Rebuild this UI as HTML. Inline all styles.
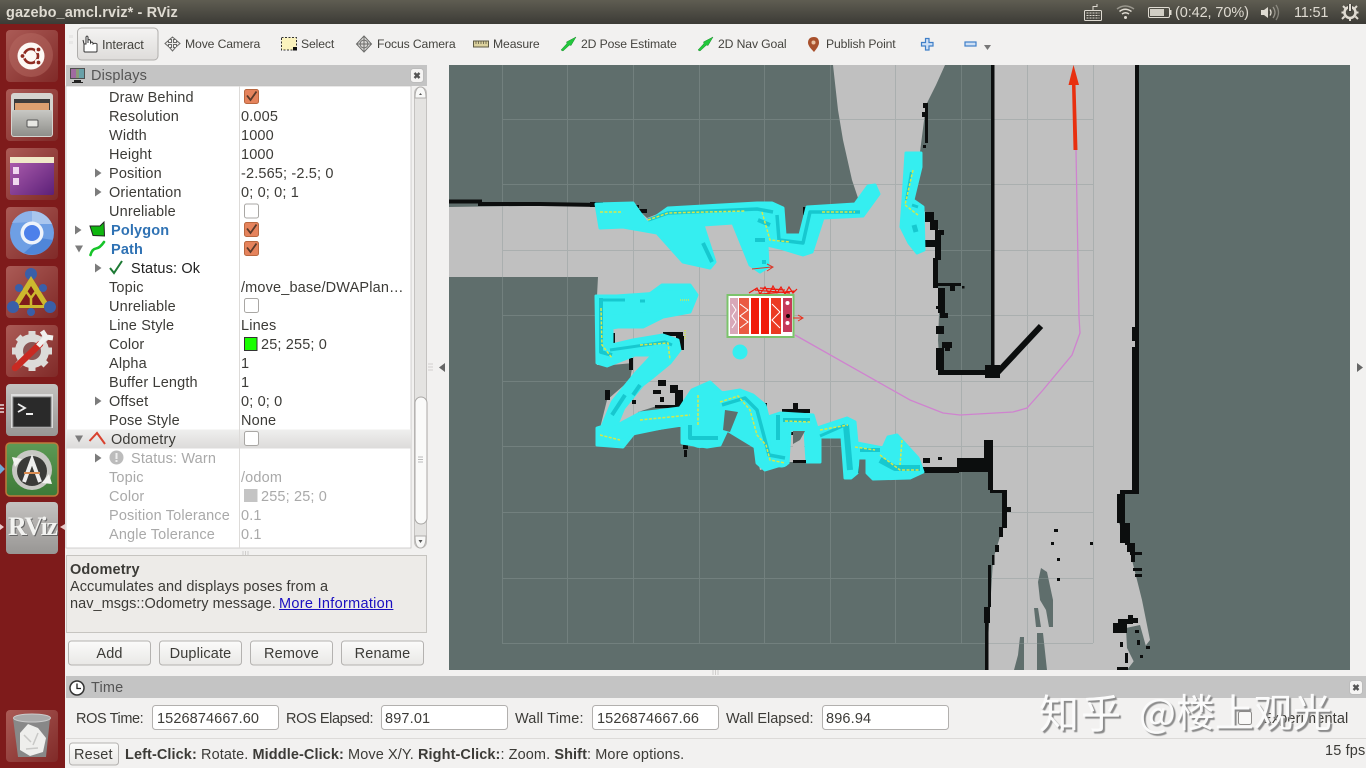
<!DOCTYPE html>
<html><head><meta charset="utf-8"><title>RViz</title>
<style>
html,body{margin:0;padding:0;width:1366px;height:768px;overflow:hidden;background:#f2f1f0}
body{position:relative;font-family:"Liberation Sans","Noto Sans CJK SC",sans-serif;font-size:14.5px;color:#3c3b37}
svg.g{position:absolute;left:0;top:0}
.t{position:absolute;white-space:nowrap;line-height:18px;height:18px;letter-spacing:.15px;margin-top:2px}
.d{color:#a9a9a9}
.b{font-weight:bold;color:#2f72b4}
.s{font-size:12.2px;letter-spacing:-.12px;color:#45443f}
.p{color:#dfdbd2}
.c{text-align:center}
</style></head><body>
<svg class="g" width="1366" height="768" viewBox="0 0 1366 768">
<defs>
<linearGradient id="tb" x1="0" y1="0" x2="0" y2="1"><stop offset="0" stop-color="#5f5d52"/><stop offset="1" stop-color="#3c3b36"/></linearGradient>
<linearGradient id="btn" x1="0" y1="0" x2="0" y2="1"><stop offset="0" stop-color="#fbfbfa"/><stop offset="1" stop-color="#e9e8e6"/></linearGradient>
<linearGradient id="ib" x1="0" y1="0" x2="0" y2="1"><stop offset="0" stop-color="#f4f3f2"/><stop offset="1" stop-color="#dedcda"/></linearGradient>
<linearGradient id="rt" x1="0" y1="0" x2="1" y2="1"><stop offset="0" stop-color="#ab5b56"/><stop offset="1" stop-color="#802a28"/></linearGradient>
<linearGradient id="gt" x1="0" y1="0" x2="0" y2="1"><stop offset="0" stop-color="#c4c2c0"/><stop offset="1" stop-color="#989694"/></linearGradient>
<linearGradient id="grn" x1="0" y1="0" x2="0" y2="1"><stop offset="0" stop-color="#5d9a55"/><stop offset="1" stop-color="#3d7a38"/></linearGradient>
<linearGradient id="pur" x1="0" y1="0" x2="1" y2="1"><stop offset="0" stop-color="#b060b0"/><stop offset="1" stop-color="#5c2078"/></linearGradient>
<linearGradient id="od" x1="0" y1="0" x2="0" y2="1"><stop offset="0" stop-color="#efefee"/><stop offset="1" stop-color="#dcdbda"/></linearGradient>
<linearGradient id="cab" x1="0" y1="0" x2="0" y2="1"><stop offset="0" stop-color="#c8c8c4"/><stop offset="1" stop-color="#8e8e8a"/></linearGradient>
<clipPath id="mapc"><rect x="449" y="65" width="901" height="605"/></clipPath>
<g id="cbon"><rect x=".5" y=".5" width="14" height="14" rx="2" fill="#e5835c" stroke="#b9673f"/><path d="M3 6.5 L6.5 11 L12.5 2.5" fill="none" stroke="#5a3a2a" stroke-width="1.8"/></g>
<g id="cboff"><rect x=".5" y=".5" width="14" height="14" rx="2" fill="#fff" stroke="#a9a7a4"/></g>
<path id="tr" d="M0 0 L6.5 4.5 L0 9 Z" fill="#7c7c7c"/>
<path id="td" d="M0 0 L8 0 L4 7 Z" fill="#7c7c7c"/>
<g id="x"><rect x="0" y="0" width="13" height="14" rx="3" fill="#f5f4f3" stroke="#bcbcbc"/><path d="M4 4.5 L9 9.5 M9 4.5 L4 9.5" stroke="#555" stroke-width="2.4"/></g>
<path id="arrg" d="M0 13 L6 6.5 L5.5 5 L15 0 L10 8.5 L8.5 8 L2 14 Z" fill="#22c83c" stroke="#1a8a2a" stroke-width=".5"/>
</defs>

<!-- top bar -->
<rect x="0" y="0" width="1366" height="24" fill="url(#tb)"/>
<!-- launcher -->
<rect x="0" y="24" width="65" height="744" fill="#7e1b1b"/>
<!-- toolbar -->
<rect x="65" y="24" width="1301" height="41" fill="#f2f1f0"/>
<rect x="77.500" y="28" width="80.500" height="32" rx="4" fill="url(#ib)" stroke="#b0aeac"/>
<path d="M70 35v3M72 35v3M70 41v3M72 41v3" stroke="#ddd" stroke-width="1"/>

<!-- Launcher tiles -->
<rect x="6" y="30" width="52" height="52" rx="4" fill="url(#rt)"/>
<circle cx="31" cy="55" r="22" fill="#b66a62" opacity=".5"/>
<circle cx="31" cy="56" r="13.5" fill="#fdf8f4"/>
<circle cx="31" cy="56" r="7" fill="none" stroke="#8e2a20" stroke-width="2.6"/>
<circle cx="37.500" cy="50.500" r="2.6" fill="#fdf8f4"/><circle cx="37.500" cy="61.500" r="2.6" fill="#fdf8f4"/><circle cx="23.500" cy="56" r="2.6" fill="#fdf8f4"/>
<circle cx="38.500" cy="49.500" r="1.900" fill="#8e2a20"/><circle cx="38.500" cy="62.500" r="1.900" fill="#8e2a20"/><circle cx="22.500" cy="56" r="1.900" fill="#8e2a20"/>

<rect x="6" y="89" width="52" height="52" rx="4" fill="url(#rt)"/>
<rect x="11" y="93" width="42" height="44" rx="3" fill="#d5d4d0"/>
<rect x="14" y="99" width="36" height="12" fill="#3c3c3c"/>
<rect x="15" y="103" width="34" height="8" fill="#dca070"/>
<rect x="12" y="110" width="40" height="26" rx="2" fill="url(#cab)"/>
<rect x="27" y="120" width="11" height="7" rx="1" fill="#e8e8e4" stroke="#555"/>

<rect x="6" y="148" width="52" height="52" rx="4" fill="url(#rt)"/>
<rect x="10" y="157" width="44" height="38" rx="2" fill="url(#pur)"/>
<rect x="10" y="157" width="44" height="6" fill="#f0e8c8"/>
<rect x="13" y="167" width="6" height="7" fill="#f0d8f0"/><rect x="13" y="178" width="6" height="7" fill="#f0d8f0"/>

<rect x="6" y="207" width="52" height="52" rx="4" fill="url(#rt)"/>
<circle cx="32" cy="233" r="22" fill="#6e9fe4"/>
<path d="M32 211 A22 22 0 0 1 52 224 L32 224 Z" fill="#a9c6ee"/>
<path d="M12 223 A22 22 0 0 1 32 211 L32 222 Z" fill="#8db2e9"/>
<path d="M24 253 A22 22 0 0 0 53 240 L40 238 Z" fill="#4f86d8"/>
<circle cx="32" cy="233" r="11.5" fill="#eef3fb"/>
<circle cx="32" cy="233" r="8" fill="#4d80ea"/>

<rect x="6" y="266" width="52" height="52" rx="4" fill="url(#rt)"/>
<circle cx="31" cy="274" r="6" fill="#3a5fa8"/>
<path d="M31 276 L51 308 L11 308 Z" fill="#cdb92e"/>
<path d="M31 286 L43 305 L19 305 Z" fill="#7e1b1b"/>
<path d="M31 298 L31 306 M25 290 L31 298 L37 290" stroke="#cdb92e" stroke-width="2.5" fill="none"/>
<circle cx="13" cy="307" r="6" fill="#3a5fa8"/><circle cx="50" cy="307" r="6" fill="#3a5fa8"/><circle cx="19" cy="288" r="4" fill="#3a5fa8"/><circle cx="43" cy="288" r="4" fill="#3a5fa8"/><circle cx="31" cy="312" r="4" fill="#3a5fa8"/>

<rect x="6" y="325" width="52" height="52" rx="4" fill="url(#rt)"/>
<circle cx="32" cy="351" r="17" fill="#dcdbd8"/>
<path d="M32 331v40M12 351h40M18 337l28 28M46 337l-28 28" stroke="#dcdbd8" stroke-width="7"/>
<circle cx="32" cy="351" r="9" fill="#8a5553"/>
<path d="M15 368 L40 344" stroke="#c92a22" stroke-width="6.5" stroke-linecap="round"/>
<path d="M38 346 L46 337 L42 331 M46 337 L53 338" stroke="#f0f0ee" stroke-width="5" fill="none"/>

<rect x="6" y="384" width="52" height="52" rx="4" fill="url(#gt)"/>
<rect x="11" y="394" width="42" height="34" fill="#ddd"/>
<rect x="13" y="397" width="38" height="30" fill="#2a2a2a" stroke="#777"/>
<path d="M18 404 L25 408 L18 412" fill="none" stroke="#eee" stroke-width="1.8"/><path d="M26 414h7" stroke="#eee" stroke-width="2"/>
<path d="M0 405h4M0 408.500h4M0 412h4" stroke="#e8dcdc" stroke-width="1.5"/>

<rect x="6" y="443" width="52" height="53" rx="4" fill="url(#grn)" stroke="#c07a3c" stroke-width="1.5"/>
<circle cx="32" cy="470" r="20" fill="#c8c8c4"/>
<circle cx="32" cy="471" r="15" fill="#3a3a38"/>
<path d="M22 459 L12 457 L15 467 Z M42 483 L52 484 L49 474 Z" fill="#f2f2f0"/>
<path d="M24 482 L32 460 L40 482" fill="none" stroke="#eee" stroke-width="4"/>
<path d="M24 473h16" stroke="#d88a50" stroke-width="2"/>
<path d="M0 464 L5 469 L0 474 Z" fill="#6fa8d8"/>

<rect x="6" y="502" width="52" height="52" rx="4" fill="url(#gt)"/>
<path d="M0 524 L4 527 L0 530 Z M65 524 L60 527 L65 530 Z" fill="#e8c8c8"/>

<rect x="6" y="710" width="52" height="52" rx="4" fill="url(#rt)"/>
<path d="M13 718 L50 718 L46 757 L18 757 Z" fill="#888"/>
<ellipse cx="32" cy="718" rx="18.500" ry="4" fill="#aaa" stroke="#ccc"/>
<path d="M20 733 L28 724 L38 728 L46 738 L43 752 L30 756 L20 750 Z" fill="#eeeeec"/>
<path d="M24 735 L31 742 M38 733 L33 745 M26 749 L38 748" stroke="#c8c8c6" stroke-width="1.500"/>

<!-- toolbar icons -->
<path d="M84 51 L84 44 L83 40 M84 44 L86 44 L86 37 Q87 35 88 37 L88 43 L88 40 Q90 39 90.500 41 L90.500 43 Q92 41 93 43 L93 44 Q95 42.500 97 44 L97 51 Q97 52 96 52 L85 52 Q84 52 84 51 Z" fill="#fff" stroke="#333" stroke-width="1"/>
<g fill="none" stroke="#6a6a68" stroke-width="1"><path d="M172.500 37 L169.500 39.500 L171.500 39.500 L171.500 42.500 L168.500 42.500 L168.500 40.500 L165 43.500 L168.500 46.500 L168.500 44.500 L171.500 44.500 L171.500 47.500 L169.500 47.500 L172.500 51 L175.500 47.500 L173.500 47.500 L173.500 44.500 L176.500 44.500 L176.500 46.500 L180 43.500 L176.500 40.500 L176.500 42.500 L173.500 42.500 L173.500 39.500 L175.500 39.500 Z" fill="#ecebea"/></g>
<rect x="281.500" y="37.500" width="15" height="12.500" fill="#fbf3bd" stroke="#333" stroke-dasharray="2 1.500"/><rect x="293" y="47" width="4" height="3.500" fill="#111"/>
<g fill="none" stroke="#6a6a68"><path d="M364 36 L371.500 44 L364 52 L356.500 44 Z" fill="#e9e8e6"/><circle cx="364" cy="44" r="4" fill="#d8d6d4"/><path d="M364 37v14M357 44h14"/></g>
<rect x="473.500" y="41" width="15" height="6" fill="#dcd29e" stroke="#5e5a44"/><path d="M476 41v3M478.500 41v3M481 41v3M483.500 41v3M486 41v3" stroke="#5e5a44" stroke-width=".8"/>
<use href="#arrg" x="561" y="37"/><use href="#arrg" x="698" y="37"/>
<path d="M814 37 Q808 37 808 43 Q808 46 814 52 Q819 46 819 43 Q819 37 814 37 Z" fill="#a8502c"/><circle cx="813.500" cy="42.500" r="2" fill="#e8c0a0"/>
<path d="M925.500 38.500h3.500v4h4v3.500h-4v4h-3.500v-4h-4v-3.500h4z" fill="#cfe0f5" stroke="#3f7fc8" stroke-width="1.200"/>
<rect x="965" y="42" width="11" height="4" fill="#cfe0f5" stroke="#3f7fc8" stroke-width="1.200"/>
<path d="M984 45 L991 45 L987.500 50 Z" fill="#777"/>

<!-- top right indicators -->
<g fill="none" stroke="#dfdbd2">
<rect x="1084.500" y="10.500" width="17" height="10" rx="1"/><path d="M1086.500 13h13M1086.500 15.500h13M1086.500 18h13" stroke-dasharray="2 1"/><path d="M1093 10V6.500h4V4"/>
<path d="M1117 9 Q1125 3 1134 9" opacity=".5" stroke-width="1.500"/><path d="M1119.500 11.500 Q1125 7 1131.500 11.500" stroke-width="1.500"/><path d="M1122 14 Q1125.500 11.500 1129 14" stroke-width="1.500"/>
<rect x="1148.500" y="7.500" width="21" height="10" rx="1.500"/>
</g>
<rect x="1150" y="9" width="14" height="7" fill="#dfdbd2" opacity=".9"/><rect x="1170" y="10" width="1.500" height="5" fill="#dfdbd2"/>
<circle cx="1125.500" cy="17.500" r="1.500" fill="#dfdbd2"/>
<path d="M1261 10h3l4-3v11l-4-3h-3z" fill="#dfdbd2"/>
<g fill="none" stroke="#dfdbd2" stroke-width="1.300"><path d="M1270 9.500 Q1272 12.500 1270 15.500"/><path d="M1273 7 Q1277 12.500 1273 18" opacity=".5"/><path d="M1276 5 Q1281 12.500 1276 20" opacity=".4"/></g>
<circle cx="1350" cy="12.500" r="5.500" fill="none" stroke="#dfdbd2" stroke-width="2.600"/>
<path d="M1350 4v8" stroke="#3f3e39" stroke-width="4"/><path d="M1350 4v7" stroke="#dfdbd2" stroke-width="2"/>
<path d="M1343 6l2.500 2.500M1357 6l-2.500 2.500M1342 19l2.500-2.500M1358 19l-2.500-2.500M1350 18v3M1341.500 12.500h2M1356.500 12.500h2" stroke="#dfdbd2" stroke-width="2"/>

<!-- Displays -->
<rect x="66" y="65" width="361" height="21" fill="#c4c4c4"/>
<rect x="70" y="68" width="15" height="11" fill="#4e4e4e"/><rect x="71" y="69" width="13" height="9" fill="#8a9a78"/><rect x="71" y="69" width="5" height="9" fill="#a06aa0"/><rect x="79" y="69" width="5" height="9" fill="#68a0a8"/>
<path d="M74 80h7v2h2v1H72v-1h2z" fill="#222"/>
<use href="#x" x="410.500" y="68.500"/>
<rect x="66" y="86" width="345" height="462" fill="#fff" stroke="#c0bebc" stroke-width=".7"/>
<rect x="66" y="429.500" width="345" height="19" fill="url(#od)"/>
<path d="M239.500 86v462" stroke="#dddbd9"/>
<!-- scrollbar -->
<rect x="414.500" y="87" width="12" height="461" rx="6" fill="#e4e3e1" stroke="#c4c2c0"/>
<path d="M415 98 Q415 87 420.500 87 Q426 87 426 98 Z" fill="#f8f8f7" stroke="#b0aeac"/>
<path d="M415 536 Q415 548 420.500 548 Q426 548 426 536 Z" fill="#f8f8f7" stroke="#b0aeac"/>
<path d="M419 95 L422 95 L420.500 93 Z M418.500 540 L422.500 540 L420.500 543 Z" fill="#555"/>
<rect x="415" y="397" width="12" height="127" rx="6" fill="#fafaf9" stroke="#a9a7a5"/>
<path d="M418 457h5M418 459.500h5M418 462h5" stroke="#bbb"/>
<!-- tree arrows -->
<use href="#tr" x="95" y="168.500"/><use href="#tr" x="95" y="187.500"/><use href="#tr" x="75" y="225.500"/><use href="#td" x="75" y="245.500"/><use href="#tr" x="95" y="263.500"/><use href="#tr" x="95" y="396.500"/><use href="#td" x="75" y="435.500"/><use href="#tr" x="95" y="453.500"/>
<!-- checkboxes -->
<use href="#cbon" x="244" y="89"/><use href="#cboff" x="244" y="203.500"/><use href="#cbon" x="244" y="222"/><use href="#cbon" x="244" y="241"/><use href="#cboff" x="244" y="298"/><use href="#cboff" x="244" y="431"/>
<!-- display icons -->
<path d="M90 226 L100 226 L104 222 L104.500 236 L93 235.500 Z" fill="#0fb60f" stroke="#222" stroke-width="1"/>
<path d="M90.500 255 Q92 249 96 248.500 Q100 248 104 242" fill="none" stroke="#17c42a" stroke-width="2.600" stroke-linecap="round"/>
<path d="M110 268 L114 273 L122 261" fill="none" stroke="#1d7a34" stroke-width="2"/>
<path d="M89.500 441 L97 433 L105 444" fill="none" stroke="#d8412e" stroke-width="2"/>
<circle cx="116.500" cy="457.500" r="7" fill="#bcbcbc"/><rect x="115.500" y="453" width="2" height="6" fill="#eee"/><rect x="115.500" y="460" width="2" height="2" fill="#eee"/>
<rect x="244.500" y="337.500" width="12.500" height="13" fill="#19ff00" stroke="#333"/>
<rect x="244" y="489" width="13.500" height="13" fill="#c4c4c4"/>
<!-- splitters -->
<path d="M243 551v5M245.500 551v5M248 551v5" stroke="#cfcdcb"/>
<path d="M428 364h5M428 367h5M428 370h5" stroke="#d2d0ce"/>
<path d="M445 363 L445 372 L439 367.500 Z" fill="#666"/>
<path d="M1357 363 L1357 372 L1363 367.500 Z" fill="#666"/>
<path d="M713 670v5M715.500 670v5M718 670v5" stroke="#cfcdcb"/>
<!-- desc -->
<rect x="66.500" y="555.500" width="360" height="77" fill="#edebe8" stroke="#c6c4c0"/>
<g fill="url(#btn)" stroke="#b4b2b0"><rect x="68.500" y="641" width="82" height="24" rx="3"/><rect x="159.500" y="641" width="82" height="24" rx="3"/><rect x="250.500" y="641" width="82" height="24" rx="3"/><rect x="341.500" y="641" width="82" height="24" rx="3"/></g>

<!-- Time -->
<rect x="66" y="676" width="1300" height="22" fill="#c4c4c4"/>
<circle cx="77" cy="688" r="7" fill="#fff" stroke="#333" stroke-width="1.500"/><path d="M77 683.500v5h4" fill="none" stroke="#222" stroke-width="1.300"/>
<use href="#x" x="1349.500" y="680.500"/>
<g fill="#fff" stroke="#b2b0ae"><rect x="152.500" y="705.500" width="126" height="24" rx="3"/><rect x="381.500" y="705.500" width="126" height="24" rx="3"/><rect x="592.500" y="705.500" width="126" height="24" rx="3"/><rect x="822.500" y="705.500" width="126" height="24" rx="3"/></g>
<path d="M66 738.500h1300" stroke="#dcdad8"/>
<rect x="69.500" y="743" width="49" height="22" rx="3" fill="url(#btn)" stroke="#b4b2b0"/>
<rect x="1238.500" y="711.500" width="13" height="13" rx="2" fill="#f8f8f7" stroke="#8e8c8a"/>

<!-- MAP -->
<g clip-path="url(#mapc)">
<rect x="449" y="65" width="901" height="605" fill="#5f6e6c"/>
<path d="M449 207 L596 205 L633 205 L647 218 L668 210 L757 205 L772 205 L783 210 L785 235 L803 235 L807 207 L857 205 L858 198 L852 180 L843 140 L838 110 L833 65 L1135 65 L1135 490 L1120 492 L1118 520 L1130 552 L1142 600 L1150 640 L1127 670 L986 670 L990 610 L993 560 L1005 520 L1005 492 L990 490 L990 470 L923 472 L873 477 L867 473 L867 458 L858 458 L857 473 L847 477 L842 437 L820 437 L820 462 L807 462 L805 462 L790 462 L788 463 L760 470 L755 447 L727 430 L682 443 L682 425 L635 432 L623 447 L597 445 L600 428 L607 400 L615 393 L630 380 L633 363 L612 365 L597 365 L597 296 L598 277 L449 277 Z" fill="#c0c0c0"/>
<!-- dark room -->
<path d="M945 65 L991 65 L991 372 L940 372 L938 340 L940 290 L935 285 L936 250 L940 232 L930 215 L915 205 L912 185 L920 152 L926 105 L936 85 Z" fill="#5f6e6c"/>
<!-- dark patches -->
<path d="M638 412 L660 405 L680 408 L682 425 L635 432 Z" fill="#5f6e6c"/>
<path d="M1041 568 L1047 572 L1053 600 L1053 627 L1049 627 L1046 610 L1040 600 L1038 582 Z M1034 608 L1038 608 L1041 627 L1036 627 Z M1037 633 L1043 633 L1047 670 L1037 670 Z M1020 637 L1024 637 L1024 670 L1014 670 L1018 655 Z" fill="#5f6e6c"/>
<path d="M1126 628 L1140 625 L1147 650 L1134 662 L1127 648 Z" fill="#5f6e6c"/>
<!-- grid -->
<g stroke="#8d9a98" stroke-width="1" opacity=".42" fill="none">
<path d="M502.500 65V643M567.500 65V643M633.500 65V643M699.500 65V643M764.500 65V643M830.500 65V643M895.500 65V643M961.500 65V643M1027.500 65V643M1093.500 65V643"/>
<path d="M502 119.500H1093M502 184.500H1093M502 250.500H1093M502 315.500H1093M502 381.500H1093M502 446.500H1093M502 512.500H1093M502 578.500H1093M502 643.500H1093"/>
</g>
<!-- black walls -->
<g fill="#0c0e0e">
<rect x="991" y="65" width="3.500" height="310"/>
<rect x="938" y="370" width="62" height="5"/>
<rect x="1135" y="65" width="4" height="300"/>
<rect x="1132" y="327" width="7" height="14"/><rect x="1132" y="347" width="7" height="145"/>
<rect x="1120" y="490" width="19" height="4"/><rect x="1117" y="494" width="8" height="29"/><rect x="1120" y="523" width="10" height="20"/><rect x="1125" y="533" width="5" height="12"/><rect x="1127" y="543" width="8" height="9"/><rect x="1130" y="552" width="12" height="3"/><rect x="1131" y="555" width="4" height="7"/><rect x="1133" y="568" width="9" height="3"/><rect x="1135" y="574" width="7" height="3"/>
<rect x="1113" y="623" width="14" height="10"/><rect x="1118" y="619" width="15" height="5"/><rect x="1128" y="615" width="5" height="4"/><rect x="1133" y="618" width="5" height="5"/><rect x="1135" y="630" width="4" height="3"/><rect x="1146" y="646" width="4" height="3"/><rect x="1125" y="653" width="3" height="10"/><rect x="1117" y="667" width="11" height="3"/><rect x="1120" y="642" width="3" height="5"/><rect x="1140" y="655" width="3" height="3"/><rect x="1137" y="640" width="3" height="5"/>
<rect x="988" y="440" width="5" height="50"/><rect x="990" y="490" width="17" height="3"/><rect x="1002" y="492" width="5" height="36"/><rect x="1002" y="507" width="9" height="5"/><rect x="999" y="527" width="4" height="10"/><rect x="995" y="545" width="4" height="7"/><rect x="992" y="555" width="2.500" height="10"/><rect x="988" y="565" width="3" height="42"/><rect x="984" y="607" width="6" height="16"/><rect x="985" y="623" width="3.500" height="47"/>
<rect x="957" y="458" width="36" height="14"/><rect x="923" y="467" width="36" height="6"/><rect x="923" y="458" width="7" height="5"/><rect x="984" y="440" width="9" height="18"/><rect x="938" y="457" width="4" height="3"/>
<rect x="925" y="103" width="3" height="40"/><rect x="922" y="112" width="4" height="5"/><rect x="923" y="103" width="3" height="5"/><rect x="923" y="145" width="3" height="3"/>
<rect x="925" y="212" width="9" height="10"/><rect x="930" y="220" width="8" height="10"/><rect x="935" y="230" width="9" height="5"/><rect x="925" y="240" width="16" height="7"/><rect x="935" y="235" width="6" height="25"/><rect x="933" y="258" width="5" height="30"/>
<rect x="936" y="283" width="25" height="3"/><rect x="950" y="283" width="5" height="8"/><rect x="938" y="288" width="7" height="25"/><rect x="936" y="306" width="8" height="3"/><rect x="940" y="313" width="8" height="5"/><rect x="936" y="326" width="8" height="8"/><rect x="942" y="342" width="10" height="6"/><rect x="945" y="345" width="5" height="6"/><rect x="936" y="348" width="8" height="22"/><rect x="962" y="286" width="2.500" height="2.500"/>
<rect x="985" y="365" width="15" height="13"/>
</g>
<path d="M998 372 L1041 326" stroke="#0c0e0e" stroke-width="6" fill="none"/>
<path d="M449 201.500 H480 V204 H540 L600 205" stroke="#0c0e0e" stroke-width="4" fill="none"/>
<g fill="#0c0e0e">
<rect x="590" y="202" width="13" height="5"/><rect x="633" y="205" width="6" height="3"/><rect x="638" y="209" width="9" height="4"/><rect x="803" y="207" width="5" height="8"/><rect x="761" y="203" width="6" height="3"/>
<rect x="605" y="330" width="5" height="4"/><rect x="610" y="333" width="5" height="12"/><rect x="663" y="332" width="20" height="4"/><rect x="676" y="336" width="8" height="14"/><rect x="657" y="357" width="8" height="7"/>
<rect x="629" y="358" width="4" height="12"/>
<rect x="658" y="380" width="8" height="6"/><rect x="670" y="385" width="8" height="8"/><rect x="675" y="390" width="8" height="18"/><rect x="653" y="390" width="8" height="4"/><rect x="660" y="397" width="4" height="5"/><rect x="655" y="405" width="20" height="3"/><rect x="605" y="390" width="5" height="10"/><rect x="632" y="400" width="4" height="4"/>
<rect x="683" y="445" width="5" height="4"/><rect x="684" y="450" width="3" height="7"/><rect x="763" y="403" width="4" height="12"/><rect x="743" y="395" width="12" height="3"/><rect x="782" y="409" width="28" height="4"/><rect x="793" y="403" width="5" height="7"/><rect x="793" y="460" width="13" height="3"/><rect x="790" y="432" width="5" height="3"/><rect x="856" y="458" width="3" height="15"/><rect x="723" y="425" width="2" height="8"/>
<rect x="1054" y="529" width="4" height="3"/><rect x="1051" y="542" width="3" height="3"/><rect x="1090" y="542" width="3" height="3"/><rect x="1057" y="558" width="3" height="3"/><rect x="1057" y="578" width="3" height="3"/>
</g>
<!-- cyan -->
<g fill="#35eef0" stroke="#35eef0" stroke-width="3" stroke-linejoin="round">
<path d="M596 204 L633 203 L647 223 L668 208 L757 203 L772 203 L783 208 L785 235 L800 235 L807 207 L855 204 L868 186 L875 185 L879 194 L863 216 L823 218 L812 252 L803 255 L780 248 L767 245 L768 267 L760 272 L750 265 L733 223 L703 225 L715 262 L710 268 L683 262 L657 233 L623 227 L600 228 Z"/>
<path d="M906 153 L921 153 L921 167 L913 200 L923 207 L924 250 L917 253 L909 243 L901 227 L903 200 Z"/>
<path d="M597 428 L607 425 L613 405 L633 382 L662 355 L635 355 L607 366 L597 363 L596 296 L647 296 L662 285 L690 285 L697 295 L690 312 L663 317 L643 327 L618 327 L612 328 L612 345 L633 340 L663 335 L678 340 L680 350 L670 363 L653 377 L640 387 L632 397 L625 405 L612 428 L640 413 L680 408 L692 390 L710 382 L722 393 L740 390 L753 395 L765 405 L768 417 L780 413 L813 415 L817 428 L847 418 L855 422 L857 443 L883 448 L888 437 L897 435 L918 458 L923 472 L910 478 L873 479 L867 473 L867 458 L858 458 L857 473 L851 478 L845 478 L842 437 L820 437 L820 462 L807 462 L805 430 L790 430 L788 463 L765 470 L757 463 L755 447 L727 430 L720 445 L707 447 L682 443 L682 425 L635 432 L623 447 L597 445 Z"/>
<circle cx="740" cy="352" r="6"/>
</g>
<g fill="none" stroke="#35eef0" stroke-linecap="round" stroke-linejoin="round">
<path d="M668 348 L640 378 L618 405 L606 434" stroke-width="16"/>
<path d="M606 436 L632 428 L690 416 L712 398 L745 400 L760 420 L765 458 L782 460" stroke-width="15"/>
<path d="M700 400 L700 435" stroke-width="26"/>
<path d="M610 305 L680 300" stroke-width="20"/>
</g>
<path d="M725 410 L738 412 L730 432 L723 430 Z" fill="#5f6e6c"/>
<path d="M793 432 L804 432 L804 461 L793 461 Z" fill="#c0c0c0"/>
<path d="M793 431 L805 431 L800 440 L793 444 Z" fill="#5f6e6c"/>
<rect x="793" y="460" width="13" height="3" fill="#0c0e0e"/>
<!-- teal -->
<g fill="none" stroke="#14c4cc" stroke-linejoin="round" opacity=".9">
<path d="M648 220 L668 213 L757 209 L773 212 M777 215 L779 240 L803 243 L810 212 L860 212" stroke-width="3.500"/>
<path d="M755 240 L765 240" stroke-width="4"/><path d="M758 220 L770 225" stroke-width="4"/>
<path d="M703 243 L712 262" stroke-width="4"/><path d="M762 262 L766 262" stroke-width="4"/>
<path d="M912 205 L918 207" stroke-width="3"/><path d="M911 172 L906 200" stroke-width="2"/><path d="M914 225 L916 232" stroke-width="5"/>
<path d="M601 298 L601 352 L612 355" stroke-width="4"/><path d="M601 300 L625 300" stroke-width="3"/><path d="M640 301 L645 301" stroke-width="3"/>
<path d="M610 350 L665 342 L672 345" stroke-width="3"/><path d="M640 385 L633 395" stroke-width="4"/><path d="M625 395 L612 415" stroke-width="4"/>
<path d="M690 425 L690 438 L718 438" stroke-width="4"/><path d="M722 405 L745 398 L757 410 L765 440 L769 455 L785 458" stroke-width="3.500"/>
<path d="M778 415 L778 440 M783 420 L810 420" stroke-width="4"/><path d="M846 425 L850 470" stroke-width="6"/><path d="M820 436 L845 425" stroke-width="3"/><path d="M860 450 L880 450" stroke-width="4"/><path d="M880 460 L895 468 L920 468" stroke-width="6"/>
</g>
<!-- yellow -->
<g fill="none" stroke="#d5e84a" stroke-width="1.500" stroke-dasharray="3 1.500">
<path d="M600 212 L622 212"/><path d="M648 220 L668 213 L745 211"/><path d="M762 212 L770 240 L790 242"/><path d="M822 212 L855 212"/>
<path d="M913 170 L905 205 L918 215"/><path d="M601 308 L602 345 L612 358"/><path d="M640 345 L668 343 L670 360"/>
<path d="M600 435 L620 440"/><path d="M640 420 L690 415"/><path d="M698 395 L698 425"/><path d="M720 402 L738 396 L750 410 L757 435 L766 445 L770 460 L785 463"/><path d="M785 421 L810 422"/><path d="M820 430 L848 425"/><path d="M855 447 L875 450"/><path d="M880 455 L900 470 L920 470"/><path d="M902 440 L900 465"/>
<path d="M685 330 L685 340" stroke-dasharray="1 1"/><path d="M680 300 L690 300" stroke-dasharray="1 1"/>
</g>
<!-- pink path -->
<path d="M795 335 L910 400 L943 413 L960 415 L1013 412 L1027 408 L1043 390 L1072 355 L1080 333 L1079 317 L1076 150" fill="none" stroke="#cf83cf" stroke-width="1.300"/>
<!-- red goal arrow -->
<path d="M1073.500 150 L1077.500 150 L1075.500 85 L1079 85 L1073.500 65 L1068.500 85 L1072 85 Z" fill="#e8300f"/>
<!-- robot -->
<path d="M749 293 L757 288 L760 294 L765 287 L769 294 L773 286 L777 293 L781 287 L785 294 L789 287 L793 293 L797 289 M750 295 L795 291 M755 290 L790 293 M760 288 L785 290" fill="none" stroke="#ee1c10" stroke-width="1.200"/>
<rect x="727.500" y="295" width="66" height="42" fill="#fff" stroke="#7cc36c" stroke-width="2"/>
<rect x="730" y="298" width="8" height="36" fill="#d8a8b8"/>
<rect x="739" y="298" width="10" height="36" fill="#ea5a42"/>
<rect x="751" y="298" width="8" height="36" fill="#f01c0a"/>
<rect x="761" y="298" width="8" height="36" fill="#f01c0a"/>
<rect x="771" y="298" width="10" height="36" fill="#ec3a22"/>
<rect x="783" y="298" width="9" height="34" fill="#c63a5a"/>
<circle cx="787.500" cy="303" r="2" fill="#fff"/><circle cx="787.500" cy="323" r="2" fill="#fff"/><circle cx="788" cy="316" r="2" fill="#180808"/>
<path d="M732 304l4 6-4 6 4 6-4 6M740 304l8 6-8 6 8 6-8 6M772 304l8 8-8 8 8 8" fill="none" stroke="#fff" stroke-width="1"/>
<path d="M793 318 L802 318 M798 315 L803 318 L798 321" fill="none" stroke="#e8301c" stroke-width="1"/>
<path d="M752 269 L772 267 M767 264 L773 267 L767 271" fill="none" stroke="#d83a2c" stroke-width="1"/>
</g>
</svg>

<!-- top bar text -->
<div class="t" style="left:6px;top:2px;font-weight:bold;font-size:14.500px;color:#dfdbd2;letter-spacing:.1px">gazebo_amcl.rviz* - RViz</div>
<div class="t p" style="left:1175px;top:2px;font-size:14.500px;letter-spacing:-.1px">(0:42, 70%)</div>
<div class="t p" style="left:1294px;top:2px;font-size:14.500px;letter-spacing:-.2px">11:51</div>

<!-- launcher text -->
<div class="t" style="left:8px;top:512px;font-family:'Liberation Serif',serif;font-weight:bold;font-size:26px;color:#f2f2f0;letter-spacing:-1.500px;line-height:26px;height:26px;text-shadow:1px 1px 0 #666">RViz</div>

<!-- toolbar text -->
<div class="t s" style="left:102px;top:34px;font-size:12.800px">Interact</div>
<div class="t s" style="left:185px;top:33px">Move Camera</div>
<div class="t s" style="left:301px;top:33px">Select</div>
<div class="t s" style="left:377px;top:33px">Focus Camera</div>
<div class="t s" style="left:493px;top:33px">Measure</div>
<div class="t s" style="left:581px;top:33px">2D Pose Estimate</div>
<div class="t s" style="left:718px;top:33px">2D Nav Goal</div>
<div class="t s" style="left:826px;top:33px">Publish Point</div>

<!-- Displays -->
<div class="t" style="left:91px;top:65px;color:#555">Displays</div>

<div class="t" style="left:109px;top:87px">Draw Behind</div>
<div class="t" style="left:109px;top:106px">Resolution</div><div class="t" style="left:241px;top:106px">0.005</div>
<div class="t" style="left:109px;top:125px">Width</div><div class="t" style="left:241px;top:125px">1000</div>
<div class="t" style="left:109px;top:144px">Height</div><div class="t" style="left:241px;top:144px">1000</div>
<div class="t" style="left:109px;top:163px">Position</div><div class="t" style="left:241px;top:163px">-2.565; -2.5; 0</div>
<div class="t" style="left:109px;top:182px">Orientation</div><div class="t" style="left:241px;top:182px">0; 0; 0; 1</div>
<div class="t" style="left:109px;top:201px">Unreliable</div>
<div class="t b" style="left:111px;top:220px">Polygon</div>
<div class="t b" style="left:111px;top:239px">Path</div>
<div class="t" style="left:131px;top:258px;color:#222">Status: Ok</div>
<div class="t" style="left:109px;top:277px">Topic</div><div class="t" style="left:241px;top:277px">/move_base/DWAPlan…</div>
<div class="t" style="left:109px;top:296px">Unreliable</div>
<div class="t" style="left:109px;top:315px">Line Style</div><div class="t" style="left:241px;top:315px">Lines</div>
<div class="t" style="left:109px;top:334px">Color</div><div class="t" style="left:261px;top:334px">25; 255; 0</div>
<div class="t" style="left:109px;top:353px">Alpha</div><div class="t" style="left:241px;top:353px">1</div>
<div class="t" style="left:109px;top:372px">Buffer Length</div><div class="t" style="left:241px;top:372px">1</div>
<div class="t" style="left:109px;top:391px">Offset</div><div class="t" style="left:241px;top:391px">0; 0; 0</div>
<div class="t" style="left:109px;top:410px">Pose Style</div><div class="t" style="left:241px;top:410px">None</div>
<div class="t" style="left:111px;top:429px">Odometry</div>
<div class="t d" style="left:131px;top:448px">Status: Warn</div>
<div class="t d" style="left:109px;top:467px">Topic</div><div class="t d" style="left:241px;top:467px">/odom</div>
<div class="t d" style="left:109px;top:486px">Color</div><div class="t d" style="left:261px;top:486px">255; 25; 0</div>
<div class="t d" style="left:109px;top:505px">Position Tolerance</div><div class="t d" style="left:241px;top:505px">0.1</div>
<div class="t d" style="left:109px;top:524px">Angle Tolerance</div><div class="t d" style="left:241px;top:524px">0.1</div>

<div class="t" style="left:70px;top:559px;font-weight:bold">Odometry</div>
<div class="t" style="left:70px;top:576px;letter-spacing:.07px">Accumulates and displays poses from a</div>
<div class="t" style="left:70px;top:593px;letter-spacing:.04px">nav_msgs::Odometry message.</div>
<div class="t" style="left:279px;top:593px;color:#1a0fc0;text-decoration:underline;letter-spacing:.3px">More Information</div>

<div class="t c" style="left:68px;width:83px;top:643px">Add</div>
<div class="t c" style="left:159px;width:83px;top:643px">Duplicate</div>
<div class="t c" style="left:250px;width:83px;top:643px">Remove</div>
<div class="t c" style="left:341px;width:83px;top:643px">Rename</div>

<!-- Time -->
<div class="t" style="left:91px;top:677px;color:#555">Time</div>
<div class="t" style="left:76px;top:708px;letter-spacing:-.4px">ROS Time:</div><div class="t" style="left:157px;top:708px;letter-spacing:.1px">1526874667.60</div>
<div class="t" style="left:286px;top:708px;letter-spacing:-.4px">ROS Elapsed:</div><div class="t" style="left:385px;top:708px">897.01</div>
<div class="t" style="left:515px;top:708px">Wall Time:</div><div class="t" style="left:597px;top:708px;letter-spacing:.1px">1526874667.66</div>
<div class="t" style="left:726px;top:708px;letter-spacing:-.05px">Wall Elapsed:</div><div class="t" style="left:826px;top:708px">896.94</div>
<div class="t" style="left:1262px;top:708px">Experimental</div>
<div class="t" style="left:74px;top:744px">Reset</div>
<div class="t" style="left:125px;top:744px;letter-spacing:.09px"><b>Left-Click:</b> Rotate. <b>Middle-Click:</b> Move X/Y. <b>Right-Click:</b>: Zoom. <b>Shift</b>: More options.</div>
<div class="t" style="left:1325px;top:740px">15 fps</div>

<!-- watermark -->
<div class="t" style="left:1039px;top:687px;height:44px;line-height:44px;font-size:40px;letter-spacing:2px;color:#fbfbfb;text-shadow:2px 2px 1px #8a8a8a;font-family:'Noto Sans CJK SC',sans-serif">知乎</div>
<div class="t" style="left:1139px;top:687px;height:44px;line-height:44px;font-size:39px;letter-spacing:0;color:#fbfbfb;text-shadow:2px 2px 1px #8a8a8a;font-family:'Noto Sans CJK SC',sans-serif">@楼上观光</div>
</body></html>
